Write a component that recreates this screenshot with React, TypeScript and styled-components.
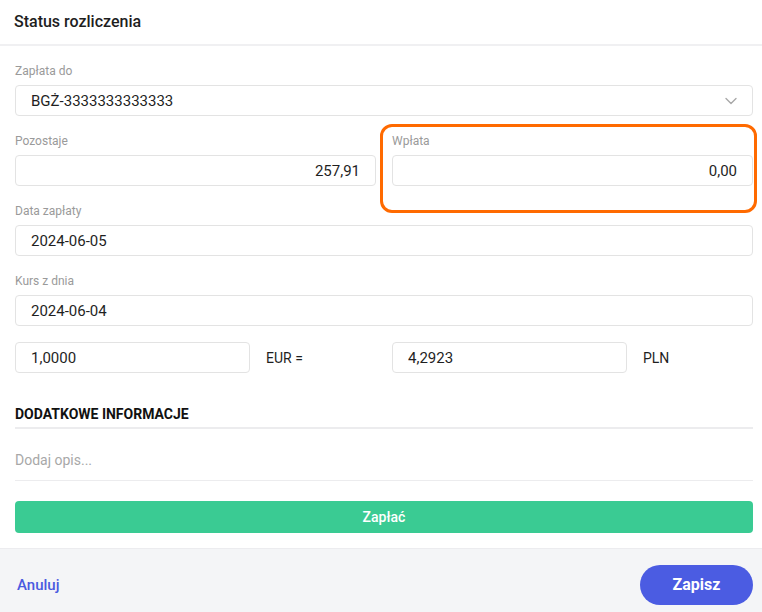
import React from "react";
import styled, { createGlobalStyle } from "styled-components";

const GlobalStyle = createGlobalStyle`
  html, body {
    margin: 0;
    padding: 0;
    background: #ffffff;
    font-family: Roboto, "Liberation Sans", Arial, sans-serif;
  }
  * { box-sizing: border-box; }
`;

const Panel = styled.div`
  width: 762px;
  height: 612px;
  display: flex;
  flex-direction: column;
  background: #fff;
  overflow: hidden;
`;

const Header = styled.div`
  height: 46px;
  display: flex;
  align-items: center;
  padding: 0 14px 2px;
  border-bottom: 2px solid #f0f0f2;
  font-size: 16px;
  font-weight: 500;
  color: #1e1e1e;
`;

const Body = styled.div`
  flex: 1;
  padding: 18px 9px 0 15px;
  display: flex;
  flex-direction: column;
`;

const Field = styled.div<{ $highlight?: boolean }>`
  position: relative;
  display: flex;
  flex-direction: column;
  margin-bottom: 18px;

  ${({ $highlight }) =>
    $highlight &&
    `
    &::after {
      content: "";
      position: absolute;
      left: -12px;
      right: -4px;
      top: -10px;
      bottom: -27px;
      border: 3px solid #ff6a00;
      border-radius: 12px;
      pointer-events: none;
    }
  `}
`;

const Label = styled.label`
  font-size: 12px;
  line-height: 14px;
  color: #9a9a9a;
  margin-bottom: 7px;
`;

const Input = styled.input<{ $right?: boolean }>`
  height: 31px;
  width: 100%;
  border: 1px solid #e3e3e3;
  border-radius: 4px;
  padding: 0 15px;
  font-family: inherit;
  font-size: 15px;
  color: #1f1f1f;
  background: #fff;
  outline: none;
  text-align: ${({ $right }) => ($right ? "right" : "left")};
`;

const SelectBox = styled.div`
  height: 31px;
  border: 1px solid #e3e3e3;
  border-radius: 4px;
  padding: 0 15px;
  display: flex;
  align-items: center;
  justify-content: space-between;
  font-size: 15px;
  color: #1f1f1f;
`;

const TwoCols = styled.div`
  display: grid;
  grid-template-columns: 1fr 1fr;
  column-gap: 16px;
`;

const RateHalf = styled.div`
  display: grid;
  grid-template-columns: 235px 1fr;
  align-items: center;
`;

const RateRow = styled(TwoCols)`
  margin-top: -2px;
`;

const Unit = styled.span`
  font-size: 14px;
  color: #1f1f1f;
  padding-left: 16px;
`;

const SectionTitle = styled.div`
  margin-top: 33px;
  padding-bottom: 5px;
  border-bottom: 2px solid #ececee;
  font-size: 14px;
  font-weight: 700;
  color: #111;
  text-transform: uppercase;
`;

const Note = styled.div`
  height: 52px;
  display: flex;
  align-items: center;
  padding-top: 10px;
  border-bottom: 1px solid #ececee;
  font-size: 14px;
  color: #a8a8a8;
`;

const PayButton = styled.button`
  margin-top: 20px;
  height: 32px;
  width: 100%;
  border: none;
  border-radius: 4px;
  background: #3acb93;
  color: #fff;
  font-family: inherit;
  font-size: 14px;
  font-weight: 500;
`;

const Footer = styled.div`
  height: 64px;
  background: #f4f5f7;
  border-top: 1px solid #ececef;
  display: flex;
  align-items: center;
  justify-content: space-between;
  padding: 8px 9px 0 17px;
`;

const CancelLink = styled.a`
  font-size: 15px;
  font-weight: 500;
  color: #4a5ae0;
  text-decoration: none;
`;

const SaveButton = styled.button`
  width: 113px;
  height: 40px;
  border: none;
  border-radius: 20px;
  background: #4b5ce2;
  color: #fff;
  font-family: inherit;
  font-size: 16px;
  font-weight: 700;
`;

const Chevron = () => (
  <svg width="12" height="8" viewBox="0 0 12 8" fill="none">
    <path d="M1 1.5l5 5 5-5" stroke="#a8a8a8" strokeWidth="1.4" strokeLinecap="round" strokeLinejoin="round" />
  </svg>
);

export default function App() {
  return (
    <>
      <GlobalStyle />
      <Panel>
        <Header>Status rozliczenia</Header>
        <Body>
          <Field>
            <Label>Zapłata do</Label>
            <SelectBox>
              <span>BGŻ-3333333333333</span>
              <Chevron />
            </SelectBox>
          </Field>
          <TwoCols>
            <Field>
              <Label>Pozostaje</Label>
              <Input $right readOnly value="257,91" />
            </Field>
            <Field $highlight>
              <Label>Wpłata</Label>
              <Input $right readOnly value="0,00" />
            </Field>
          </TwoCols>
          <Field>
            <Label>Data zapłaty</Label>
            <Input readOnly value="2024-06-05" />
          </Field>
          <Field>
            <Label>Kurs z dnia</Label>
            <Input readOnly value="2024-06-04" />
          </Field>
          <RateRow>
            <RateHalf>
              <Input readOnly value="1,0000" />
              <Unit>EUR =</Unit>
            </RateHalf>
            <RateHalf>
              <Input readOnly value="4,2923" />
              <Unit>PLN</Unit>
            </RateHalf>
          </RateRow>
          <SectionTitle>Dodatkowe informacje</SectionTitle>
          <Note>Dodaj opis...</Note>
          <PayButton>Zapłać</PayButton>
        </Body>
        <Footer>
          <CancelLink href="#">Anuluj</CancelLink>
          <SaveButton>Zapisz</SaveButton>
        </Footer>
      </Panel>
    </>
  );
}
